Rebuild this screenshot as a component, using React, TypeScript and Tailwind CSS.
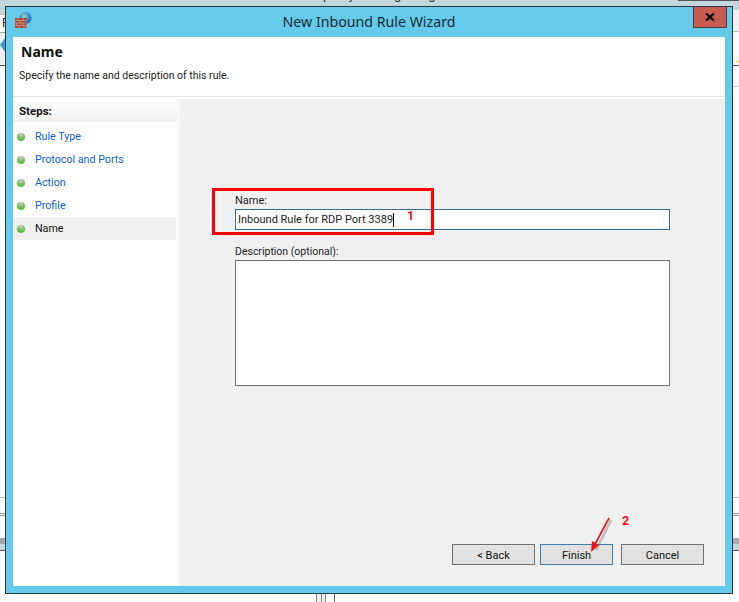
const font = { fontFamily: 'Roboto, "Noto Sans", sans-serif' };

function WallIcon() {
  return (
    <svg width="17" height="17" viewBox="0 0 17 17" className="shrink-0">
      <defs>
        <radialGradient id="globe" cx="0.4" cy="0.35" r="0.7">
          <stop offset="0" stopColor="#9fe08a" />
          <stop offset="0.45" stopColor="#3f9ad8" />
          <stop offset="1" stopColor="#1f5fa8" />
        </radialGradient>
      </defs>
      <circle cx="10.5" cy="6" r="6" fill="url(#globe)" />
      <rect x="0" y="6" width="11.5" height="10" fill="#a5463a" />
      <path d="M0 8.5H11.5M0 11H11.5M0 13.5H11.5" stroke="#d8a090" strokeWidth="0.7" />
      <path d="M3 6V8.5M8 6V8.5M5.5 8.5V11M1.5 11V13.5M8 11V13.5M4 13.5V16M9 13.5V16" stroke="#d8a090" strokeWidth="0.7" />
    </svg>
  );
}

function Dot() {
  return (
    <span className="w-[8px] h-[8px] rounded-full bg-[radial-gradient(circle_at_50%_20%,#d0d6cc_0%,#8dbb78_35%,#52c42a_75%)] shrink-0" />
  );
}

function Step({ label, active }: { label: string; active?: boolean }) {
  return (
    <div className={`h-[23px] flex items-center pl-[4px] mr-px text-[10.7px] ${active ? "bg-[#f0f0f0] text-[#111]" : "text-[#0a5fd8]"}`}>
      <Dot />
      <span className="ml-[10px] pt-[2px]">{label}</span>
    </div>
  );
}

function Btn({ label, focus, cls }: { label: string; focus?: boolean; cls: string }) {
  return (
    <div className={`h-[21px] flex items-center justify-center pt-[1px] bg-[#e1e1e1] border text-[#111] ${focus ? "border-[#3a7fb5]" : "border-[#707070]"} ${cls}`}>
      {label}
    </div>
  );
}

function Ticks() {
  return (
    <>
      <div className="h-px shrink-0 bg-[#bbb]" />
      <div className="h-[15px] shrink-0" />
      <div className="h-[3px] shrink-0 border-y border-[#999]" />
      <div className="h-[22px] shrink-0" />
      <div className="h-[6px] shrink-0 bg-[#aaa]" />
      <div className="h-[7px] shrink-0 bg-[#c3d6dc] border-b border-[#555]" />
    </>
  );
}

export default function App() {
  return (
    <div className="relative w-[739px] h-[602px] overflow-hidden bg-white text-[11px] leading-none flex flex-col" style={font}>
      {/* top of the page behind the window */}
      <div className="relative h-[6px] shrink-0 bg-[#c3d6dc] overflow-hidden">
        <span className="absolute left-[300px] top-[-12px] text-[13px] text-[#333] tracking-[1px]">Properly configuring</span>
        <div className="absolute right-0 top-0 w-[61px] h-px bg-[#555]" />
      </div>

      <div className="flex shrink-0">
        {/* left edge of the page behind the window */}
        <div className="w-[5px] shrink-0 flex flex-col overflow-hidden">
          <div className="h-[8px] shrink-0 bg-[#c3d6dc]" />
          <div className="h-[18px] shrink-0 bg-white border-t border-[#bbb] text-[#222] text-[12px] pl-[2px] pt-[2px]">P</div>
          <div className="relative h-[34px] shrink-0 bg-[#f0f0f0] border-y border-t-[#aaa] border-b-[#555]">
            <div className="absolute left-0 top-[5px] w-0 h-0 border-y-[7px] border-y-transparent border-r-[5px] border-r-[#3f9ad8]" />
          </div>
          <div className="h-[431px] shrink-0" />
          <Ticks />
        </div>

        {/* dialog window */}
        <div className="w-[728px] h-[588px] shrink-0 border border-[#2b3a42] bg-[#65c9ea] flex flex-col">
          <div className="h-[30px] shrink-0 relative flex items-center justify-center">
            <div className="absolute left-[9px] top-[5px]"><WallIcon /></div>
            <span className="text-[#1c2b33] text-[14.2px]" style={{ fontFamily: '"Noto Sans", sans-serif' }}>New Inbound Rule Wizard</span>
            <div className="absolute right-[5px] top-0 w-[34px] h-[21px] bg-[#c75d52] border-x border-b border-[#4a3c3c] flex items-center justify-center">
              <svg width="10" height="8" viewBox="0 0 10 8">
                <path d="M1 0.5L9 7.5M9 0.5L1 7.5" stroke="#000" strokeWidth="2.2" />
              </svg>
            </div>
          </div>

          <div className="flex-1 mx-[7px] mb-[7px] bg-white flex flex-col min-h-0">
            <div className="h-[60px] shrink-0 border-b border-[#e5e5e5] pl-[6px]">
              <div className="pt-[8px] pl-[2px] font-bold text-[14px] text-[#111]" style={{ fontFamily: '"Noto Sans", sans-serif' }}>Name</div>
              <div className="mt-[12px] text-[10.5px] text-[#222]">Specify the name and description of this rule.</div>
            </div>

            <div className="flex-1 flex min-h-0 pt-[2px]">
              <div className="w-[164px] shrink-0 flex flex-col">
                <div className="h-[23px] shrink-0 flex items-center pl-[6px] pt-[2px] font-bold text-[11.5px] text-[#111] bg-gradient-to-b from-white to-[#f0f0f0]">Steps:</div>
                <div className="pt-[3px]">
                  <Step label="Rule Type" />
                  <Step label="Protocol and Ports" />
                  <Step label="Action" />
                  <Step label="Profile" />
                  <Step label="Name" active />
                </div>
              </div>
              <div className="w-[3px] shrink-0 bg-[#f7f7f7]" />
              <div className="flex-1 bg-[#f0f0f0] flex flex-col pl-[55px] pr-[55px] pt-[96px] text-[#222]">
                <div>Name:</div>
                <div className="mt-[3px] h-[21px] bg-white border border-[#2f6f9f] flex items-center pl-[2px]">
                  <span>Inbound Rule for RDP Port 3389</span>
                  <span className="w-px h-[14px] bg-black" />
                </div>
                <div className="mt-[17px] text-[10.5px]">Description (optional):</div>
                <div className="mt-[2px] h-[126px] bg-white border border-[#707070]" />
                <div className="mt-auto mb-[21px] -mr-[34px] flex justify-end">
                  <Btn label="< Back" cls="w-[83px]" />
                  <Btn label="Finish" focus cls="w-[73px] ml-[5px]" />
                  <Btn label="Cancel" cls="w-[83px] ml-[8px]" />
                </div>
              </div>
            </div>
          </div>
        </div>

        {/* right edge of the page behind the window */}
        <div className="w-[6px] shrink-0 flex flex-col">
          <div className="h-[4px] shrink-0 bg-[#c3d6dc]" />
          <div className="h-[22px] shrink-0 bg-[#f0f0f0] border-b border-[#bbb]" />
          <div className="h-[34px] shrink-0 border-b border-[#555] flex flex-col justify-end items-end pb-[3px]">
            <span className="w-[2px] h-px bg-[#d9962a]" />
          </div>
          <div className="h-[20px] shrink-0" />
          <div className="h-px shrink-0 bg-[#ccc]" />
          <div className="h-[410px] shrink-0" />
          <Ticks />
        </div>
      </div>

      {/* what shows below the window */}
      <div className="h-[8px] shrink-0 flex pl-[316px]">
        <span className="w-[6px] border-x border-[#888] bg-[#eee]" />
        <span className="w-[4px] border-r border-[#888] bg-[#eee]" />
        <span className="w-px ml-[8px] bg-[#666]" />
      </div>

      {/* screenshot annotations */}
      <div className="absolute left-[212px] top-[188px] w-[222px] h-[47px] border-[3px] border-[#ff0000]" />
      <span className="absolute left-[407px] top-[210px] text-[#e8101c] font-bold text-[12.5px]">1</span>
      <span className="absolute left-[622px] top-[515px] text-[#e8101c] font-bold text-[12.5px]">2</span>
      <svg className="absolute left-[585px] top-[512px]" width="30" height="46" viewBox="0 0 30 46">
        <path d="M24 6L9 36" stroke="#000" strokeOpacity="0.18" strokeWidth="3" transform="translate(2 2)" />
        <path d="M24 6L8 36" stroke="#e8141c" strokeWidth="1.6" />
        <path d="M6 40L7 29L14 33Z" fill="#e8141c" />
      </svg>
    </div>
  );
}
